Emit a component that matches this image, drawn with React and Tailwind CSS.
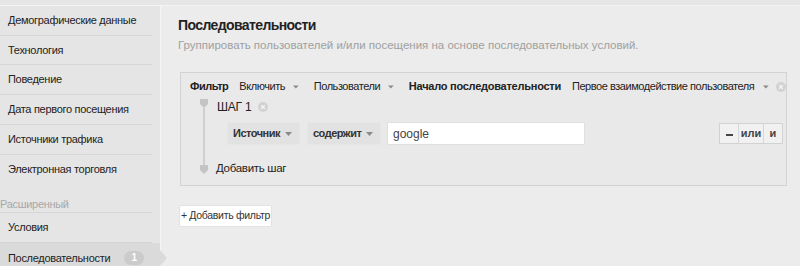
import React from 'react'

const font = { fontFamily: '"Liberation Sans", Arial, sans-serif' }

function Caret({ className = '' }) {
  return (
    <svg width="7" height="4" viewBox="0 0 7 4" className={className}>
      <path d="M0 0h7L3.5 4z" fill="#8a8a8a" />
    </svg>
  )
}

function XCircle() {
  return (
    <svg width="10" height="10" viewBox="0 0 10 10">
      <circle cx="5" cy="5" r="5" fill="#d2d2d2" />
      <path d="M3.2 3.2l3.6 3.6M6.8 3.2l-3.6 3.6" stroke="#f4f4f4" strokeWidth="1.3" />
    </svg>
  )
}

function Marker() {
  return (
    <svg width="8" height="9" viewBox="0 0 8 9" className="block">
      <path d="M0 0h8v5L4 9 0 5z" fill="#c4c4c4" />
    </svg>
  )
}

const items = [
  'Демографические данные',
  'Технология',
  'Поведение',
  'Дата первого посещения',
  'Источники трафика',
]

function Sidebar() {
  return (
    <div className="w-[160px] shrink-0 bg-[#e5e5e5] flex flex-col text-[11px] tracking-[-0.3px] text-[#222] whitespace-nowrap">
      {items.map((t, i) => (
        <div
          key={t}
          className={`shrink-0 ${i === 0 ? 'h-[29.5px]' : 'h-[29.8px]'} mr-2 border-b border-[#d6d6d6] flex items-center pl-2`}
        >
          {t}
        </div>
      ))}
      <div className="shrink-0 h-[29.7px] mr-2 flex items-center pl-2">Электронная торговля</div>
      <div className="shrink-0 h-[29px] mr-2 border-b border-[#d6d6d6] flex items-end text-[#a8a8a8]">
        Расширенный
      </div>
      <div className="shrink-0 h-[29.5px] mr-2 border-b border-[#d6d6d6] flex items-center pl-2">Условия</div>
      <div className="shrink-0 relative h-[30px] bg-[#dadada] flex items-center pl-2">
        <span>Последовательности</span>
        <span className="ml-[14px] h-[14px] w-[20px] rounded-full bg-[#cbcbcb] text-white text-[10px] font-bold flex items-center justify-center">
          1
        </span>
        <span className="absolute right-[-7px] top-[7px] w-0 h-0 border-y-[8px] border-y-transparent border-l-[7px] border-l-[#dadada]" />
      </div>
    </div>
  )
}

function SelectBox({ label, w }) {
  return (
    <div className={`${w} h-[23px] bg-[#e2e2e2] border border-[#e6e6e6] flex items-center justify-between pl-[5px] pr-[7px]`}>
      <span className="text-[11px] font-bold text-[#333] tracking-[-0.5px]">{label}</span>
      <Caret />
    </div>
  )
}

function FilterBox() {
  return (
    <div className="ml-[19px] mr-[13px] mt-[20px] h-[114px] border border-[#d3d3d3] bg-[#e9e9e9] text-[11px] tracking-[-0.3px] text-[#222] whitespace-nowrap">
      <div className="flex items-center h-[26px] pl-[9px] pt-[1px] tracking-[-0.45px]">
        <span className="font-bold">Фильтр</span>
        <span className="ml-[11px]">Включить</span>
        <Caret className="ml-[8px]" />
        <span className="ml-[15px]">Пользователи</span>
        <Caret className="ml-[8px]" />
        <span className="ml-[15px] font-bold tracking-[-0.25px]">Начало последовательности</span>
        <span className="ml-[11px]">Первое взаимодействие пользователя</span>
        <Caret className="ml-[9px]" />
        <span className="ml-[7px] mt-[1px]">
          <XCircle />
        </span>
      </div>
      <div className="flex pl-[19px]">
        <div className="w-[8px] flex flex-col items-center">
          <Marker />
          <div className="w-[2px] h-[57px] bg-[#cfcfcf]" />
          <Marker />
        </div>
        <div className="flex-1 pl-[9px]">
          <div className="flex items-center gap-[6px] h-[14px] mt-[1px] text-[12px] tracking-[-0.2px]">
            <span>ШАГ 1</span>
            <XCircle />
          </div>
          <div className="flex items-center mt-[8px] pl-[10px] pr-[2px]">
            <SelectBox label="Источник" w="w-[73px]" />
            <div className="w-[7px]" />
            <SelectBox label="содержит" w="w-[74px]" />
            <div className="ml-[6px] w-[198px] h-[23px] bg-white border border-[#e0e0e0] flex items-center pl-[5px] text-[12px] tracking-normal text-[#444]">
              google
            </div>
            <div className="ml-auto mr-[1px] flex h-[21px] border border-[#d2d2d2] bg-[#f1f1f1] text-[11px] font-bold text-[#444] tracking-normal">
              <div className="w-[19px] flex items-center justify-center border-r border-[#d6d6d6]">
                <span className="w-[7px] h-[2px] bg-[#444] mt-[3px]" />
              </div>
              <div className="w-[25px] flex items-center justify-center border-r border-[#d6d6d6]">или</div>
              <div className="w-[18px] flex items-center justify-center">и</div>
            </div>
          </div>
          <div className="mt-[17px] h-[14px] flex items-center -ml-[1px] text-[11.5px] tracking-[-0.3px]">Добавить шаг</div>
        </div>
      </div>
    </div>
  )
}

export default function App() {
  return (
    <div style={font} className="w-[800px] h-[266px] overflow-hidden bg-[#ececec] flex flex-col">
      <div className="h-[6px] shrink-0 bg-[#e6e6e6] border-b border-[#f4f4f4]" />
      <div className="flex flex-1 min-h-0">
        <Sidebar />
        <div className="flex-1 min-w-0 border-l border-[#f4f4f4] bg-[#ececec]">
          <div className="pl-[17px] pt-[11px] whitespace-nowrap">
            <div className="text-[14px] font-bold text-[#222] leading-[17px] tracking-[-0.6px]">Последовательности</div>
            <div className="text-[11.5px] text-[#a0a0a0] mt-[4px] leading-[14px]">
              Группировать пользователей и/или посещения на основе последовательных условий.
            </div>
          </div>
          <FilterBox />
          <div className="ml-[18px] mt-[19px] w-[93px] h-[22px] bg-white border border-[#e2e2e2] rounded-[2px] flex items-center justify-center text-[10.5px] tracking-[-0.3px] text-[#333] whitespace-nowrap">
            + Добавить фильтр
          </div>
        </div>
      </div>
    </div>
  )
}
